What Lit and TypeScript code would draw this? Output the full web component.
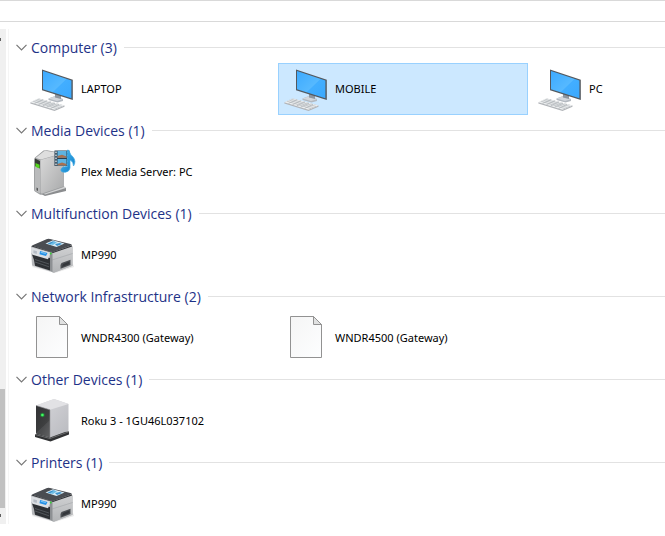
import { LitElement, html, css, svg } from "lit";
import { customElement, property, state } from "lit/decorators.js";
import { classMap } from "lit/directives/class-map.js";

type Kind = "computer" | "media" | "printer" | "file" | "server";

interface Device {
  name: string;
  kind: Kind;
}

interface Group {
  title: string;
  devices: Device[];
}

const GROUPS: Group[] = [
  {
    title: "Computer",
    devices: [
      { name: "LAPTOP", kind: "computer" },
      { name: "MOBILE", kind: "computer" },
      { name: "PC", kind: "computer" },
    ],
  },
  { title: "Media Devices", devices: [{ name: "Plex Media Server: PC", kind: "media" }] },
  { title: "Multifunction Devices", devices: [{ name: "MP990", kind: "printer" }] },
  {
    title: "Network Infrastructure",
    devices: [
      { name: "WNDR4300 (Gateway)", kind: "file" },
      { name: "WNDR4500 (Gateway)", kind: "file" },
    ],
  },
  { title: "Other Devices", devices: [{ name: "Roku 3 - 1GU46L037102", kind: "server" }] },
  { title: "Printers", devices: [{ name: "MP990", kind: "printer" }] },
];

const ART = {
  computer: svg`
    <defs>
      <linearGradient id="screen" x1="0" y1="0" x2="1" y2="1">
        <stop offset="0" stop-color="#3caaff" /><stop offset="0.55" stop-color="#56b9ff" />
        <stop offset="0.57" stop-color="#42aeff" /><stop offset="1" stop-color="#3aa8fd" />
      </linearGradient>
    </defs>
    <path d="M20.5 33.5 L27 31 L35 34 L35 36 L29.500 37.500 L20.500 35 Z" fill="#b3b9c0" />
    <path d="M20.500 33.500 L27 31.300 L35 34.300 L29 36 Z" fill="#d3d7dc" />
    <path d="M27 28 L33 30 V34 L27 32.500 Z" fill="#8e969f" />
    <path d="M14 4.600 L44.800 14.800 V35 L14 25.300 Z" fill="#53585e" />
    <path d="M15 6 L43.400 15.600 V33.200 L15 24.300 Z" fill="url(#screen)" />
    <path d="M2.300 37.400 L11 33.400 L36.500 40.600 V41.800 L26.500 46 L2.300 38.600 Z" fill="#b1b4b8" />
    <path d="M2.300 37.200 L11 33.400 L36.500 40.600 L26.500 44.800 Z" fill="#eceeef" />
    <path d="M5 36.200 L29 43.600 M7.300 35.200 L31.500 42.600 M9.300 34.300 L34 41.500" stroke="#b3b7bb" stroke-width=".7" />
    <path d="M6.500 38.400 L15 34.700 M10.500 39.700 L19 35.900 M14.500 41 L23 37 M18.500 42.200 L27 38.200 M22.500 43.500 L31 39.300" stroke="#b3b7bb" stroke-width=".8" />`,
  media: svg`
    <defs>
      <linearGradient id="drive" x1="0" y1="0" x2="1" y2="1">
        <stop offset="0" stop-color="#dadada" /><stop offset="1" stop-color="#a9aaab" />
      </linearGradient>
      <linearGradient id="note" x1="0" y1="0" x2="1" y2="1">
        <stop offset="0" stop-color="#52bff5" /><stop offset="1" stop-color="#0878c4" />
      </linearGradient>
    </defs>
    <path d="M11 45 L33 38 L38 40 V43 L17 48 Z" fill="#8b8d8f" />
    <path d="M13 44 L36 38 L38 40 L17 46.500 Z" fill="#d2d3d4" />
    <path d="M7 9.500 L15.500 2.500 Q17 2 19 2.200 L34 5 Q36 5.500 35.800 8 V39 L14 46.500 Q12 47 11 46 L7 43.500 Q6 43 6 41 V12 Q6 10.500 7 9.500 Z" fill="#9a9c9e" />
    <path d="M7.500 10 L16 3.200 Q17 2.600 19 3 L34 5.600 L13 11.500 Z" fill="#dedede" />
    <path d="M12.500 12 L33.500 6 Q35 5.700 35 8 V38.500 L14 45.500 Q12.500 45.800 12.500 44 Z" fill="url(#drive)" />
    <path d="M6.800 11 L12 12.500 V45.500 L7.500 43 Q6.800 42.500 6.800 41 Z" fill="#b9babb" />
    <path d="M7 10.500 L12 13 V20.500 L7 18 Z" fill="#363b36" />
    <path d="M7.500 15 L11.500 16.800 V20.500 L7.500 18.700 Z" fill="#54d51d" />
    <path d="M8.500 39.500 L10 40.200 V43 L8.500 42.200 Z" fill="#57595a" />
    <path d="M26.500 2.500 H41.500 V18 H26.500 Z" fill="#263f52" />
    <path d="M29.500 3 H38.500 V9.700 H29.500 Z M29.500 11 H38.500 V17.500 H29.500 Z" fill="#5fb3df" />
    <path d="M29.500 8 L34 6.800 L38.500 8.500 V9.700 H29.500 Z M29.500 16 L34 14.500 L38.500 16 V17.500 H29.500 Z" fill="#a9704f" />
    <path d="M28 3.500 V18 M40 3.500 V18" stroke="#f4f4f4" stroke-width="1.300" stroke-dasharray="1.700 1.300" />
    <path d="M39.500 2 Q40.500 1.500 41.200 3.500 Q42.500 7 45 9 Q48.500 13 45.500 18 Q45.500 13.500 42 12 V20 Q41.500 23.500 37.500 24.200 Q32.500 24.500 33 21.500 Q34 18.300 39.300 18.500 Z" fill="url(#note)" stroke="#3ba9e4" stroke-width=".7" />`,
  printer: svg`
    <defs>
      <linearGradient id="shell" x1="0" y1="0" x2="0" y2="1">
        <stop offset="0" stop-color="#cfd0d2" /><stop offset="1" stop-color="#b2b4b6" />
      </linearGradient>
    </defs>
    <path d="M5 34.500 L26 42 L45 33 L46 36 L27 42 L4 36 Z" fill="#d6d6d6" opacity=".5" />
    <path d="M3 15.500 L19 8.500 L44.600 15.500 V34.800 L25.800 41.700 L4 34.600 Z" fill="#b7b9bc" />
    <path d="M24 22 L44.600 15.500 V34.800 L25.800 41.700 L24 41 Z" fill="url(#shell)" />
    <path d="M24 29 L44.600 22.500" stroke="#a8aaad" stroke-width=".7" />
    <path d="M4 14.500 L18.500 8.200 Q20 7.500 22 8 L42.500 13 Q44.500 13.500 43 14.500 L25 21 L21.500 20.500 Z" fill="#4a4d52" />
    <path d="M4 14.500 L21.500 20.500 L25 21 L44 14.200 V15.500 L25 22 L3.500 15.500 Z" fill="#303337" />
    <path d="M17.500 12.500 L25 9.200 L36.500 12.500 L28.500 16 Z" fill="#d9ecf6" />
    <path d="M19.500 12.500 L25 10.200 L27.500 11 L22.500 13.500 Z M27 13 L32 12 L34 13 L29 15 Z" fill="#3a93ce" />
    <path d="M26 10.500 L29 11.300 L25 14 L22 13.200 Z" fill="#6dbde6" />
    <path d="M3.500 22 L22 27 V39.600 L7 34.700 L6 29 Z" fill="#2d3034" />
    <path d="M7 28.500 L21 33 M7 31 L21 35.800" stroke="#5b5f64" stroke-width=".8" />
    <path d="M3 16.300 L22.500 21.800 L20 28.300 L4.500 23.800 Q3 23 3 21 Z" fill="#dcdfe3" />
    <path d="M5.500 19.300 L9 20.300 L8.700 23 L5.400 22 Z" fill="#b6bcc5" />
    <path d="M12 19.900 L19.500 21.900 L18 25 L11.500 23.200 Z" fill="#2690e5" />
    <path d="M13 20.700 L18 22 L17.500 23 L12.700 21.700 Z" fill="#7ac6f8" />
    <path d="M22 21 L24.500 21.700 V41 L22 39.800 Z" fill="#8d9093" />
    <circle cx="22.700" cy="22.500" r="1" fill="#37cf36" />
    <path d="M33.500 32 L42.500 28.800 V34 L32.500 37.800 V34 Z" fill="#4b4e52" />
    <path d="M35 33 L41.500 30.500 V33 L34 36 Z" fill="#33363a" />`,
  file: svg`
    <defs>
      <linearGradient id="paper" x1="0" y1="0" x2="1" y2="1">
        <stop offset="0" stop-color="#f5f5f5" /><stop offset="1" stop-color="#fdfeff" />
      </linearGradient>
    </defs>
    <path d="M8.500 2.500 H31.500 L39.500 10.500 V43.500 H8.500 Z" fill="url(#paper)" stroke="#929292" />
    <path d="M31.500 2.500 V10.500 H39.500 Z" fill="#e0e1e1" stroke="#929292" stroke-linejoin="round" />`,
  server: svg`
    <defs>
      <linearGradient id="side" x1="0" y1="0" x2="1" y2="1">
        <stop offset="0" stop-color="#d8d8dc" /><stop offset="1" stop-color="#b9babf" />
      </linearGradient>
      <linearGradient id="front" x1="0" y1="0" x2="1" y2="1">
        <stop offset="0" stop-color="#313234" /><stop offset=".6" stop-color="#3e3f40" />
        <stop offset="1" stop-color="#595a5b" />
      </linearGradient>
    </defs>
    <path d="M7 37.500 L20 34 L41 34.500 V37.500 L22.500 44.500 L7 40 Z" fill="#303133" />
    <path d="M7 37.500 L22 41.500 L41 34.700" fill="none" stroke="#77787a" stroke-width=".8" />
    <path d="M8 8.500 L26 2 L40.500 7 V33.800 L22 40.500 L8 36.500 Z" fill="url(#side)" />
    <path d="M8 8.500 L26 2 L40.500 7 L22 12.800 Z" fill="#e2e2e5" />
    <path d="M8 8.500 L22 12.800 V40.500 L8 36.500 Z" fill="url(#front)" />
    <path d="M8 8.500 L22 12.800 V40.500" fill="none" stroke="#99999c" stroke-width=".6" />
    <path d="M8 36 L22 23 V40.500 Z" fill="#77787a" opacity=".25" />
    <circle cx="14.400" cy="18" r="2.300" fill="#14b53a" opacity=".55" />
    <circle cx="14.400" cy="18" r="1.300" fill="#42ff60" />`,
};

@customElement("device-tile")
export class DeviceTile extends LitElement {
  @property({ attribute: false }) device!: Device;
  @property({ type: Boolean }) selected = false;

  static styles = css`
    :host {
      display: block;
      flex: none;
    }
    .tile {
      display: flex;
      align-items: center;
      gap: 5px;
      width: 250px;
      padding: 1px 3px;
      border: 1px solid transparent;
      background: none;
      color: #000;
      font: 11px/16px "Noto Sans", "Open Sans", sans-serif;
      text-align: left;
      white-space: nowrap;
    }
    .selected {
      border-color: #99d1ff;
      background: #cce8ff;
    }
    .art {
      display: block;
      width: 48px;
      height: 48px;
    }
  `;

  render() {
    return html`<button
      class=${classMap({ tile: true, selected: this.selected })}
      aria-pressed=${this.selected ? "true" : "false"}
    >
      <svg class="art" viewBox="0 0 48 48" aria-hidden="true">${ART[this.device.kind]}</svg>
      <span>${this.device.name}</span>
    </button>`;
  }
}

@customElement("device-group")
export class DeviceGroup extends LitElement {
  @property({ attribute: false }) group!: Group;
  @property() selected = "";
  @state() private open = true;

  static styles = css`
    :host {
      display: block;
    }
    .header {
      display: flex;
      align-items: center;
      width: 100%;
      height: 31px;
      padding: 0 0 0 7px;
      border: 0;
      background: none;
      color: #1e3287;
      font: 14px/20px "Open Sans", "Noto Sans", sans-serif;
      white-space: nowrap;
    }
    .title {
      padding-top: 1px;
    }
    .chevron {
      width: 11px;
      height: 7px;
      margin-right: 4px;
      fill: none;
      stroke: #777;
      stroke-width: 1.2;
    }
    .rule {
      flex: 1;
      height: 1px;
      margin-left: 7px;
      background: #e2e2e2;
    }
    .tiles {
      display: flex;
      gap: 4px;
      padding-left: 15px;
    }
  `;

  render() {
    const { title, devices } = this.group;
    return html`
      <button
        class="header"
        aria-expanded=${this.open ? "true" : "false"}
        @click=${() => (this.open = !this.open)}
      >
        <svg class="chevron" viewBox="0 0 11 7" aria-hidden="true"><path d="M.5 .8 L5.500 5.800 L10.500 .8" /></svg>
        <span class="title">${title} (${devices.length})</span>
        <span class="rule"></span>
      </button>
      ${this.open
        ? html`<div class="tiles">
            ${devices.map(
              (d) => html`<device-tile
                .device=${d}
                .selected=${d.name === this.selected}
                @click=${() => this.dispatchEvent(new CustomEvent("pick", { detail: d.name }))}
              ></device-tile>`
            )}
          </div>`
        : ""}
    `;
  }
}

@customElement("app-root")
export class AppRoot extends LitElement {
  @state() private selected = "MOBILE";

  static styles = css`
    :host {
      display: block;
      background: #fff;
      overflow: hidden;
    }
    .toolbar {
      height: 20px;
      border-top: 1px solid #d9d9d9;
      border-bottom: 1px solid #d9d9d9;
    }
    .body {
      display: flex;
      padding-top: 7px;
    }
    .scrollbar {
      display: flex;
      flex-direction: column;
      flex: none;
      width: 6px;
      margin-bottom: 6px;
      background: #f0f0f0;
    }
    .arrow {
      width: 1px;
      height: 3px;
      margin: 9px 0 7px;
      background: #606060;
    }
    .track {
      display: flex;
      flex: 1;
      flex-direction: column;
      justify-content: flex-end;
    }
    .thumb {
      width: 5px;
      height: 26%;
      margin-bottom: -3px;
      background: #c1c1c1;
    }
    .divider {
      flex: none;
      width: 1px;
      margin: 0 0 6px 2px;
      background: #f5f5f5;
    }
    .list {
      flex: 1;
      min-width: 0;
      padding-top: 3px;
    }
  `;

  render() {
    return html`
      <div class="toolbar"></div>
      <div class="body">
        <div class="scrollbar" aria-hidden="true">
          <div class="arrow"></div>
          <div class="track"><div class="thumb"></div></div>
          <div class="arrow"></div>
        </div>
        <div class="divider"></div>
        <main class="list">
          ${GROUPS.map(
            (g) => html`<device-group
              .group=${g}
              .selected=${this.selected}
              @pick=${(e: CustomEvent<string>) => (this.selected = e.detail)}
            ></device-group>`
          )}
        </main>
      </div>
    `;
  }
}
